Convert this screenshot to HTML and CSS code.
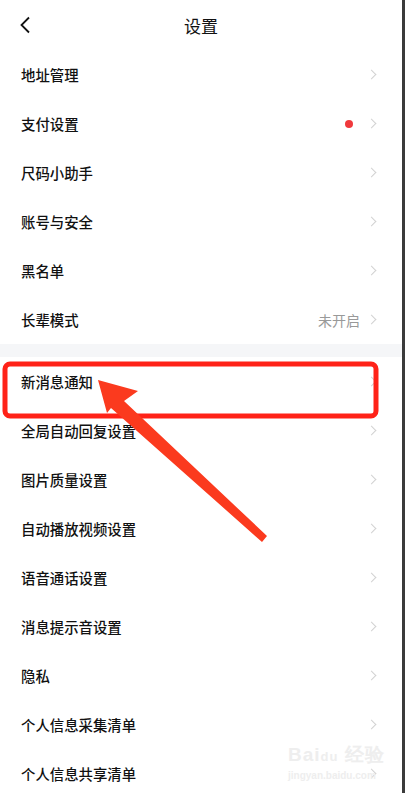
FILE: index.html
```html
<!DOCTYPE html>
<html>

<head>
  <meta content="width=device-width, initial-scale=1">
  <link rel="stylesheet" href="styles.css">
</head>

<body>
  <div class="page">
    <div class="header">
      <svg class="back" width="12" height="18" viewBox="0 0 12 18">
        <path d="M10 1.5 L2.5 9 L10 16.5" fill="none" stroke="#111" stroke-width="1.8" />
      </svg>
      <span class="title">设置</span>
    </div>

    <div class="group">
      <div class="row"><span class="label">地址管理</span><span class="arrow"></span></div>
      <div class="row"><span class="label">支付设置</span><span class="dot"></span><span class="arrow"></span></div>
      <div class="row"><span class="label">尺码小助手</span><span class="arrow"></span></div>
      <div class="row"><span class="label">账号与安全</span><span class="arrow"></span></div>
      <div class="row"><span class="label">黑名单</span><span class="arrow"></span></div>
      <div class="row"><span class="label">长辈模式</span><span class="value">未开启</span><span class="arrow"></span></div>
    </div>

    <div class="gap"></div>

    <div class="group">
      <div class="row"><span class="label">新消息通知</span><span class="arrow"></span></div>
      <div class="row"><span class="label">全局自动回复设置</span><span class="arrow"></span></div>
      <div class="row"><span class="label">图片质量设置</span><span class="arrow"></span></div>
      <div class="row"><span class="label">自动播放视频设置</span><span class="arrow"></span></div>
      <div class="row"><span class="label">语音通话设置</span><span class="arrow"></span></div>
      <div class="row"><span class="label">消息提示音设置</span><span class="arrow"></span></div>
      <div class="row"><span class="label">隐私</span><span class="arrow"></span></div>
      <div class="row"><span class="label">个人信息采集清单</span><span class="arrow"></span></div>
      <div class="row"><span class="label">个人信息共享清单</span><span class="arrow"></span></div>
    </div>

    <!-- annotation drawn over the screenshot -->
    <svg class="mark" width="405" height="793" viewBox="0 0 405 793">
      <rect x="5" y="364" width="371" height="52" rx="5" fill="none" stroke="#ff2218" stroke-width="5" />
      <polygon points="98,380 138,391 124,401 267,536 262,542 111,408 107,413" fill="#fb3a1e" />
    </svg>

    <div class="watermark">
      <span class="wm-logo">Bai<b>du</b> 经验</span>
      <span class="wm-url">jingyan.baidu.com</span>
    </div>
  </div>
</body>

</html>
```

FILE: styles.css
```css
html, body {
  margin: 0;
  padding: 0;
  background: #fff;
}

.page {
  position: relative;
  width: 402px;
  height: 793px;
  overflow: hidden;
  border-right: 3px solid #3b3b3b;
  font-family: "Noto Sans CJK SC", "Noto Sans", sans-serif;
  color: #111;
}

.header {
  height: 50px;
  display: flex;
  align-items: center;
  justify-content: center;
  position: relative;
}

.back {
  position: absolute;
  left: 19px;
  top: 16px;
}

.title {
  font-size: 17px;
}

.row {
  height: 49px;
  display: flex;
  align-items: center;
  padding: 0 27px 0 21px;
}

.label {
  flex: 1;
  font-size: 14.4px;
  font-weight: 500;
}

.value {
  font-size: 14px;
  color: #999;
  margin-right: 8px;
}

.dot {
  width: 8px;
  height: 8px;
  border-radius: 50%;
  background: #f0393c;
  margin-right: 15px;
}

.arrow {
  width: 6px;
  height: 6px;
  border-top: 1.5px solid #d2d2d2;
  border-right: 1.5px solid #d2d2d2;
  transform: rotate(45deg);
}

.gap {
  height: 13px;
  background: #f5f6f8;
}

.mark {
  position: absolute;
  left: 0;
  top: 0;
}

.watermark {
  position: absolute;
  left: 288px;
  top: 742px;
  display: flex;
  flex-direction: column;
  color: #eeeeee;
  font-family: "Liberation Sans", sans-serif;
}

.wm-logo {
  font-size: 19px;
  font-weight: bold;
  letter-spacing: 1px;
}

.wm-logo b {
  font-size: 13px;
}

.wm-url {
  font-size: 10px;
  font-weight: bold;
  margin-top: 2px;
}
```
